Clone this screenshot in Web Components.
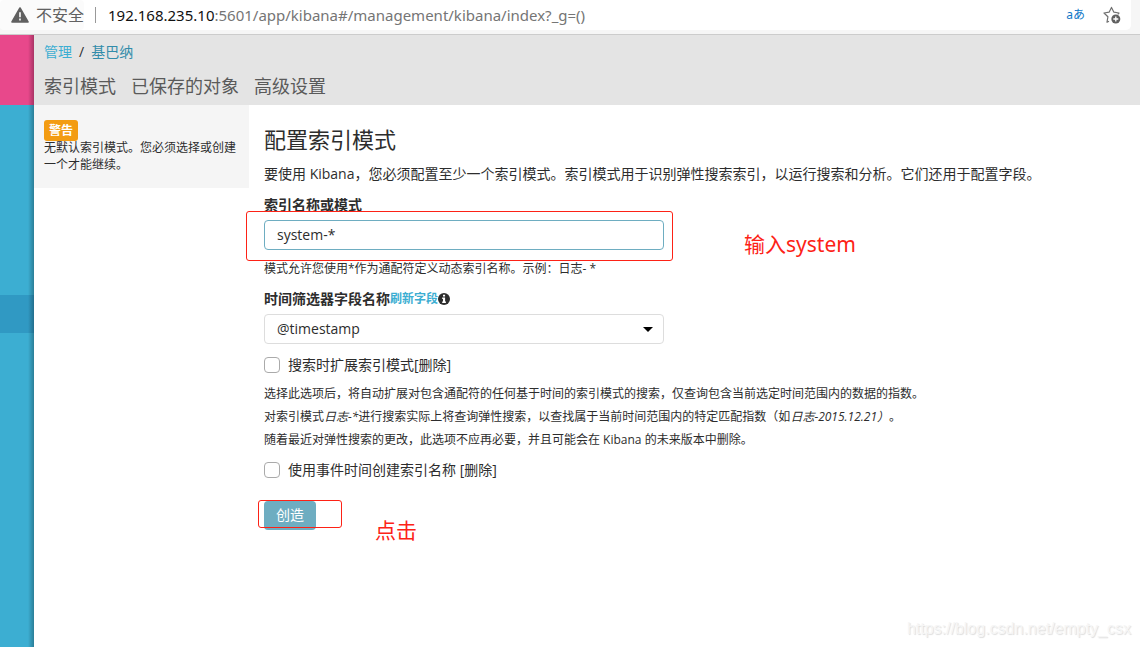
<!DOCTYPE html>
<html lang="zh-CN">
<head>
<meta charset="utf-8">
<title>Kibana</title>
<style>
html, body { margin: 0; }
body { font-family: "Open Sans", "Noto Sans CJK SC", sans-serif; font-size: 14px; line-height: 20px; color: #2d2d2d; background: #fff; text-spacing-trim: space-all; }
</style>
</head>
<body>
<kbn-window></kbn-window>

<template id="kbn-window">
<style>
:host { display: flex; flex-direction: column; min-height: 100vh; position: relative; }
.body { flex: 1; display: flex; }
.page { flex: 1; min-width: 0; }
.columns { display: flex; align-items: flex-start; }
kbn-form { flex: 1; min-width: 0; }
.watermark { position: absolute; right: 9px; bottom: 8px; font: 16px/20px "Liberation Sans", Arial, sans-serif; color: #f6f6f6; text-shadow: 1px 1px 1px #ddd; }
</style>
<address-bar></address-bar>
<div class="body">
  <side-nav></side-nav>
  <div class="page">
    <page-header></page-header>
    <div class="columns">
      <warning-note label="警告">无默认索引模式。您必须选择或创建一个才能继续。</warning-note>
      <kbn-form></kbn-form>
    </div>
  </div>
</div>
<span class="watermark">https://blog.csdn.net/empty_csx</span>
</template>

<template id="address-bar">
<style>
:host { display: block; background: #f6f6f6; border-bottom: 1px solid #ccc; padding: 0 9px 4px 0; }
.bar { display: flex; align-items: center; height: 30px; background: #fff; border-radius: 0 0 5px 5px; font-family: "Noto Sans", "Noto Sans CJK SC", sans-serif; font-size: 15px; color: #757575; }
.security { display: flex; align-items: center; height: 30px; padding-left: 11px; gap: 7px; background: #fbfbfb; border-radius: 4px; font-size: 16px; color: #616161; }
.rule { width: 1px; height: 16px; margin: 0 12px 0 11px; background: #999; }
.url { flex: 1; white-space: nowrap; }
b { font-weight: 400; color: #111; }
.translate { font-size: 12px; color: #0f77c8; margin-right: 18px; }
svg { display: block; }
.star { margin-right: 10px; }
</style>
<div class="bar">
  <div class="security">
    <svg width="18" height="16" viewBox="0 0 18 16"><path d="M9 1 17 15H1Z" fill="#606060" stroke="#606060" stroke-width="1.6" stroke-linejoin="round"/><path d="M9 5.2v5M9 11.6v1.8" stroke="#fff" stroke-width="1.6"/></svg>
    <span>不安全</span>
  </div>
  <div class="rule"></div>
  <div class="url"><b>192.168.235.10</b>:5601/app/kibana#/management/kibana/index?_g=()</div>
  <span class="translate">aあ</span>
  <svg class="star" width="18" height="18" viewBox="0 0 18 18"><path d="M6 15.2 4 16.2 4.9 10.8 1 7 6.1 6.2 8.5 1.4 10.9 6.2 16 7 14.8 8.3" fill="none" stroke="#707070" stroke-width="1.2" stroke-linejoin="round"/><circle cx="12.8" cy="13" r="4.5" fill="#606060"/><path d="M10.3 13h5M12.8 10.5v5" stroke="#fff" stroke-width="1.3"/></svg>
</div>
</template>

<template id="side-nav">
<style>
:host { display: block; width: 34px; background: #3caed2; position: relative; }
:host::after { content: ""; position: absolute; top: 0; right: 0; bottom: 0; width: 6px; background: linear-gradient(to right, rgba(0,0,0,0), rgba(0,0,0,.28)); }
.logo { height: 70px; background: #e8488b; }
.item { height: 38px; }
.active { background: #3099c3; }
</style>
<div class="logo"></div>
<nav><div class="item"></div><div class="item"></div><div class="item"></div><div class="item"></div><div class="item"></div><div class="item active"></div></nav>
</template>

<template id="page-header">
<style>
:host { display: flex; flex-direction: column; gap: 12px; background: #e4e4e4; padding: 7px 10px 7px; }
.crumbs { display: flex; gap: 7px; }
.crumbs a { color: #3caed2; text-decoration: none; }
.crumbs a.current { color: #328caa; }
.tabs { display: flex; gap: 15px; font-size: 18px; line-height: 24px; }
.tabs a { color: #5a5a5a; text-decoration: none; }
</style>
<nav class="crumbs"><a href="#management">管理</a><span>/</span><a class="current" href="#kibana">基巴纳</a></nav>
<nav class="tabs"><a href="#index">索引模式</a><a href="#objects">已保存的对象</a><a href="#settings">高级设置</a></nav>
</template>

<template id="warning-note">
<style>
:host { display: block; box-sizing: border-box; width: 215px; padding: 15px 10px; background: #f5f5f5; font-size: 12px; line-height: 17px; }
.tag { display: table; padding: 2px 5px; border-radius: 3px; background: #f39c12; color: #fff; font-weight: 700; }
p { margin: -2px 0 0; }
</style>
<span class="tag"></span>
<p><slot></slot></p>
</template>

<template id="kbn-form">
<style>
:host { display: block; padding: 20px 15px; }
h1 { margin: 0 0 11px; font-size: 22px; line-height: 28px; font-weight: 400; }
p { margin: 0; }
.intro { margin-bottom: 11px; }
form { display: flex; flex-direction: column; align-items: flex-start; gap: 10px; }
.notes { display: flex; flex-direction: column; gap: 3px; font-size: 12px; margin: -1px 0; }
.submit { position: relative; margin-top: 11px; }
button { display: block; height: 29px; padding: 0 12px 2px; border: 0; border-radius: 4px; background: #6eadc1; color: #fff; font: inherit; }
.frame { position: absolute; inset: -1px -26px 2px -6px; }
.click { position: absolute; left: 111px; top: 15px; }
</style>
<h1>配置索引模式</h1>
<p class="intro">要使用 Kibana，您必须配置至少一个索引模式。索引模式用于识别弹性搜索索引，以运行搜索和分析。它们还用于配置字段。</p>
<form>
  <index-name-field label="索引名称或模式" value="system-*">模式允许您使用*作为通配符定义动态索引名称。示例：日志- *</index-name-field>
  <time-field></time-field>
  <check-option>搜索时扩展索引模式[删除]</check-option>
  <div class="notes">
    <p>选择此选项后，将自动扩展对包含通配符的任何基于时间的索引模式的搜索，仅查询包含当前选定时间范围内的数据的指数。</p>
    <p>对索引模式<em>日志-*</em>进行搜索实际上将查询弹性搜索，以查找属于当前时间范围内的特定匹配指数（如<em>日志-2015.12.21）</em>。</p>
    <p>随着最近对弹性搜索的更改，此选项不应再必要，并且可能会在 Kibana 的未来版本中删除。</p>
  </div>
  <check-option>使用事件时间创建索引名称 [删除]</check-option>
  <div class="submit">
    <button type="button">创造</button>
    <mark-frame class="frame"></mark-frame>
    <mark-text class="click">点击</mark-text>
  </div>
</form>
</template>

<template id="index-name-field">
<style>
:host { display: block; width: 400px; max-width: 100%; }
label { display: block; font-weight: 700; margin-bottom: 5px; }
.control { position: relative; }
input { display: block; box-sizing: border-box; width: 100%; height: 30px; padding: 0 12px 2px; border: 1px solid #6eadc1; border-radius: 4px; outline: 0; background: #fff; color: inherit; font: inherit; }
.hint { font-size: 12px; margin-top: 9px; white-space: nowrap; }
.frame { position: absolute; inset: -9px -9px -11px -18px; pointer-events: none; }
.text { position: absolute; left: 480px; top: 10px; }
</style>
<label for="name"></label>
<div class="control">
  <input id="name" type="text">
  <mark-frame class="frame"></mark-frame>
  <mark-text class="text">输入system</mark-text>
</div>
<div class="hint"><slot></slot></div>
</template>

<template id="time-field">
<style>
:host { display: block; width: 400px; max-width: 100%; }
.head { display: flex; align-items: center; margin-bottom: 5px; font-weight: 700; }
a { color: #3caed2; font-size: 12px; text-decoration: none; }
.control { position: relative; }
select { display: block; appearance: none; box-sizing: border-box; width: 100%; height: 30px; padding: 0 12px; border: 1px solid #ddd; border-radius: 4px; background: #fff; color: inherit; font: inherit; }
.caret { position: absolute; right: 11px; top: 13px; pointer-events: none; }
</style>
<div class="head"><label for="time">时间筛选器字段名称</label><a href="#refresh">刷新字段</a>
<svg width="12" height="12" viewBox="0 0 12 12"><circle cx="6" cy="6" r="6" fill="#2d2d2d"/><path d="M5 1.7h2.1v1.8H5zM4.2 4.6h2.9v4h.8v1.5H4.2V8.6H5V6h-.8z" fill="#fff"/></svg></div>
<div class="control">
  <select id="time"><option>@timestamp</option></select>
  <svg class="caret" width="10" height="5" viewBox="0 0 10 5"><path d="M0 0h10L5 5z" fill="#000"/></svg>
</div>
</template>

<template id="check-option">
<style>
:host { display: block; margin-top: 1px; }
label { display: flex; align-items: center; gap: 8px; }
input { appearance: none; box-sizing: border-box; width: 16px; height: 16px; margin: 0; border: 1px solid #aaa; border-radius: 4px; background: #fff; }
</style>
<label><input type="checkbox"><span><slot></slot></span></label>
</template>

<template id="mark-frame">
<style>:host { display: block; border: 1px solid #fd2216; border-radius: 3px; pointer-events: none; }</style>
</template>

<template id="mark-text">
<style>:host { display: block; font-family: "Noto Sans", "Noto Sans CJK SC", sans-serif; font-size: 21px; line-height: 28px; color: #fd2216; white-space: nowrap; }</style>
<slot></slot>
</template>

<script>
class KbnElement extends HTMLElement {
  constructor() {
    super();
    const template = document.getElementById(this.localName);
    this.attachShadow({ mode: "open" }).appendChild(template.content.cloneNode(true));
  }
}
class MarkFrame extends KbnElement {}
class MarkText extends KbnElement {}
class CheckOption extends KbnElement {}
class TimeField extends KbnElement {}
class IndexNameField extends KbnElement {
  connectedCallback() {
    this.shadowRoot.querySelector("label").textContent = this.getAttribute("label");
    this.shadowRoot.querySelector("input").value = this.getAttribute("value");
  }
}
class WarningNote extends KbnElement {
  connectedCallback() {
    this.shadowRoot.querySelector(".tag").textContent = this.getAttribute("label");
  }
}
class KbnForm extends KbnElement {}
class PageHeader extends KbnElement {}
class SideNav extends KbnElement {}
class AddressBar extends KbnElement {}
class KbnWindow extends KbnElement {}
customElements.define("mark-frame", MarkFrame);
customElements.define("mark-text", MarkText);
customElements.define("check-option", CheckOption);
customElements.define("time-field", TimeField);
customElements.define("index-name-field", IndexNameField);
customElements.define("warning-note", WarningNote);
customElements.define("kbn-form", KbnForm);
customElements.define("page-header", PageHeader);
customElements.define("side-nav", SideNav);
customElements.define("address-bar", AddressBar);
customElements.define("kbn-window", KbnWindow);
</script>
</body>
</html>
